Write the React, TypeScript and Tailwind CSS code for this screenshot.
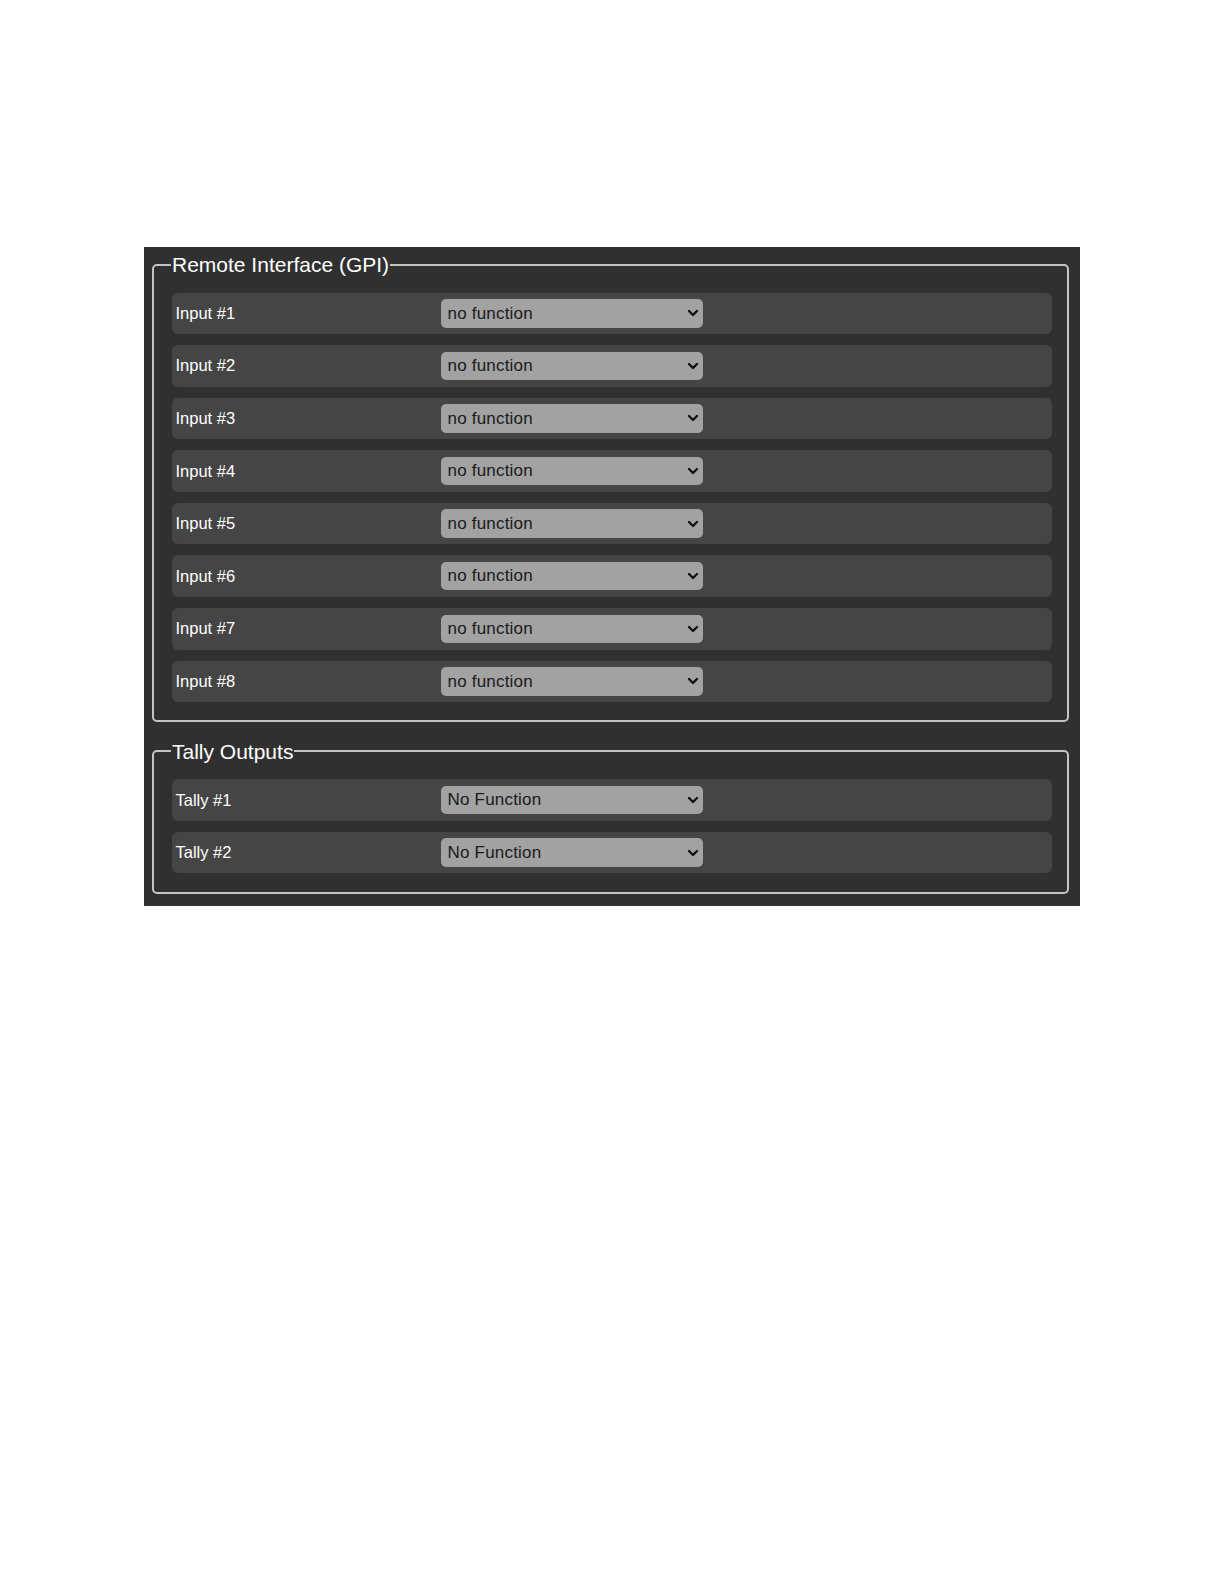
import React from 'react';

interface Row {
    label: string;
    value: string;
}

const inputs: Row[] = Array.from({ length: 8 }, (_, i) => ({
    label: `Input #${i + 1}`,
    value: 'no function',
}));

const tallies: Row[] = [
    { label: 'Tally #1', value: 'No Function' },
    { label: 'Tally #2', value: 'No Function' },
];

const Chevron = () => (
    <svg className="pointer-events-none absolute right-[4px] top-1/2 -translate-y-1/2" width="12" height="12" viewBox="0 0 12 12">
        <polyline points="2,4 6,8 10,4" fill="none" stroke="#111" strokeWidth="2.4" strokeLinecap="round" strokeLinejoin="round" />
    </svg>
);

const SettingRow = ({ row }: { row: Row }) => (
    <div className="flex h-[41.5px] items-center rounded-[6px] bg-[#454545] pl-[4px]">
        <span className="w-[265px] text-[16.5px] text-white">{row.label}</span>
        <div className="relative">
            <select
                defaultValue={row.value}
                className="h-[28.5px] w-[262px] appearance-none rounded-[5px] bg-[#a2a2a2] pl-[7px] text-[17px] tracking-[0.2px] text-[#1a1a1a] outline-none"
            >
                <option>{row.value}</option>
            </select>
            <Chevron />
        </div>
    </div>
);

const Group = ({ title, rows, className }: { title: string; rows: Row[]; className?: string }) => (
    <fieldset className={`rounded-[5px] border-2 border-[#c4c4c4] pl-[17.5px] pr-[15.5px] ${className ?? ''}`}>
        <legend className="-ml-[0.5px] px-[1px] text-[21px] leading-[23px] text-white">{title}</legend>
        <div className="flex flex-col gap-[11.1px]">
            {rows.map((r) => (
                <SettingRow key={r.label} row={r} />
            ))}
        </div>
    </fieldset>
);

export default function App() {
    return (
        <div className="bg-white pb-[400px] pt-[247px] font-['Liberation_Sans',Arial,sans-serif]">
            <div className="ml-[144px] w-[936px] bg-[#303030] pb-[12px] pl-[8px] pr-[11px] pt-[6px]">
                <Group title="Remote Interface (GPI)" rows={inputs} className="pb-[17.5px] pt-[16.5px]" />
                <Group title="Tally Outputs" rows={tallies} className="mt-[18px] pb-[19px] pt-[16.5px]" />
            </div>
        </div>
    );
}
